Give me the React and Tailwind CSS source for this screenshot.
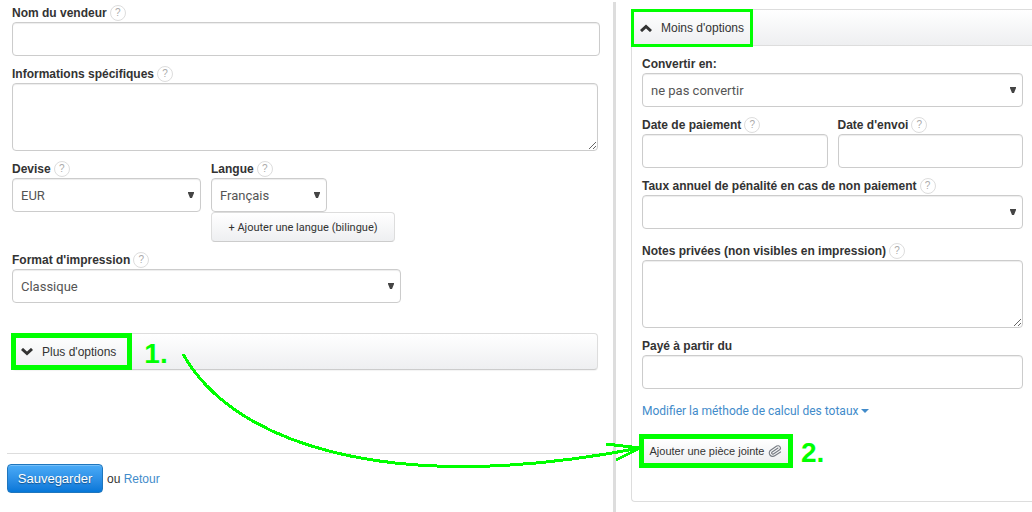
import { useState } from 'react';

const fieldClass = 'block w-full rounded border border-[#ccc] bg-white px-2 font-[Roboto,sans-serif] text-[13px] text-[#555] shadow-[inset_0_1px_1px_rgba(0,0,0,0.075)] outline-none focus:border-sky-400';

function Label({ htmlFor, help = true, children }) {
    return (
        <div className="mb-px flex h-4 items-center gap-[3px]">
            <label htmlFor={htmlFor} className="text-xs leading-4 font-bold whitespace-nowrap text-[#333]">{children}</label>
            {help && (
                <button type="button" aria-label="Aide" className="flex size-4 shrink-0 items-center justify-center rounded-full border border-[#ddd] bg-white text-[10px] leading-none text-[#aaa]">?</button>
            )}
        </div>
    );
}

function TextField({ id, label, help }) {
    return (
        <div>
            <Label htmlFor={id} help={help}>{label}</Label>
            <input id={id} type="text" className={`${fieldClass} h-[34px]`} />
        </div>
    );
}

function TextArea({ id, label }) {
    return (
        <div>
            <Label htmlFor={id}>{label}</Label>
            <textarea id={id} className={`${fieldClass} h-[68px] resize`} />
        </div>
    );
}

function SelectField({ id, label, help, options }) {
    return (
        <div>
            <Label htmlFor={id} help={help}>{label}</Label>
            <div className="relative">
                <select id={id} className={`${fieldClass} h-[34px] appearance-none pt-[2px]`}>
                    {options.map(o => <option key={o}>{o}</option>)}
                </select>
                <svg viewBox="0 0 6 6" className="pointer-events-none absolute top-[14px] right-[7px] size-[6px] fill-[#444]">
                    <path d="M0 0h6v1L4 6H2L0 1z" />
                </svg>
            </div>
        </div>
    );
}

function Chevron({ up }) {
    return (
        <svg viewBox="0 0 12 8" className="h-2 w-3 fill-none stroke-[#333] stroke-3">
            <path d={up ? 'M1 7L6 2.5L11 7' : 'M1 1L6 5.5L11 1'} />
        </svg>
    );
}

function Clip() {
    return (
        <svg viewBox="0 0 24 24" className="size-[14px] fill-none stroke-[#777c83] stroke-2" strokeLinecap="round" strokeLinejoin="round">
            <path transform="rotate(12 12 12)" d="m16 6-8.414 8.586a2 2 0 0 0 2.829 2.829l8.414-8.586a4 4 0 1 0-5.657-5.657l-8.379 8.551a6 6 0 1 0 8.485 8.485l8.379-8.551" />
        </svg>
    );
}

export default function App() {
    const [open, setOpen] = useState(true);

    return (
        <div className="relative grid min-h-screen grid-cols-[minmax(0,613fr)_3px_minmax(0,416fr)] overflow-hidden bg-white font-['Liberation_Sans',Arial,sans-serif] text-xs text-[#333]">
            {/* Left column */}
            <form className="pt-[5px] pl-[7px]" onSubmit={e => e.preventDefault()}>
                <div className="flex flex-col gap-[10px] pr-[15px] pl-[5px]">
                    <div className="-mr-[2px]">
                        <TextField id="seller" label="Nom du vendeur" />
                    </div>
                    <TextArea id="infos" label="Informations spécifiques" />
                    <div className="flex items-start gap-[10px]">
                        <div className="w-[189px]">
                            <SelectField id="currency" label="Devise" options={['EUR', 'USD', 'GBP']} />
                        </div>
                        <div>
                            <div className="w-[116px]">
                                <SelectField id="lang" label="Langue" options={['Français', 'English']} />
                            </div>
                            <button type="button" className="h-[30px] w-[184px] rounded border border-[#ddd] border-b-[#ccc] bg-linear-to-b from-white to-[#eeeff1] pt-[2px] font-[Roboto,sans-serif] text-[11px] whitespace-nowrap">
                                + Ajouter une langue (bilingue)
                            </button>
                        </div>
                    </div>
                    <div className="w-[389px]">
                        <SelectField id="format" label="Format d'impression" options={['Classique', 'Moderne']} />
                    </div>
                    <div className="relative mt-5 flex h-[37px] items-center rounded border border-[#ddd] border-b-[#ccc] bg-linear-to-b from-white to-[#eeeff1] shadow-[0_1px_1px_rgba(0,0,0,0.05)]">
                        <button type="button" className="flex items-center gap-[9px] pl-2">
                            <Chevron />
                            Plus d'options
                        </button>
                        <span className="pointer-events-none absolute -top-px -left-[2px] h-[37px] w-[121px] border-5 border-[#0f0]" />
                        <span className="ml-7 pt-1 text-[28px] leading-none font-bold text-[#0f0]">1.</span>
                    </div>
                </div>

                <div className="mt-[83px] mr-3 flex items-center gap-1 border-t border-[#ddd] pt-[10px]">
                    <button type="submit" className="h-[29px] w-24 rounded border border-[#1f76bd] bg-linear-to-b from-[#4aabf7] to-[#0577d8] text-[13px] text-white shadow-[inset_0_1px_0_rgba(255,255,255,0.25)] [text-shadow:0_1px_1px_rgba(0,0,0,0.4)]">
                        Sauvegarder
                    </button>
                    <span>ou <a href="#retour" className="text-[#428bca]">Retour</a></span>
                </div>
            </form>

            <div className="mt-[2px] bg-[#ddd]" />

            {/* Right column */}
            <div className="pt-[9px] pl-[15px]">
                <section className="rounded-l border border-r-0 border-[#ddd]">
                    <header className="relative flex h-9 items-center border-b border-[#ddd] bg-linear-to-b from-white to-[#eeeff1]">
                        <button type="button" onClick={() => setOpen(!open)} className="flex items-center gap-[9px] pl-2">
                            <Chevron up />
                            Moins d'options
                        </button>
                        <span className="pointer-events-none absolute -top-px -left-px h-[38px] w-[122px] border-3 border-[#0f0]" />
                    </header>
                    {open && (
                        <div className="flex flex-col gap-[10px] pt-[10px] pr-[9px] pb-[33px] pl-[10px]">
                            <SelectField id="convert" label="Convertir en:" help={false} options={['ne pas convertir', 'EUR', 'USD']} />
                            <div className="grid grid-cols-2 gap-[10px]">
                                <TextField id="paid" label="Date de paiement" />
                                <TextField id="sent" label="Date d'envoi" />
                            </div>
                            <SelectField id="penalty" label="Taux annuel de pénalité en cas de non paiement" options={['']} />
                            <div className="mt-1">
                                <TextArea id="notes" label="Notes privées (non visibles en impression)" />
                            </div>
                            <TextField id="from" label="Payé à partir du" help={false} />
                            <a href="#totaux" className="mt-1 flex items-center gap-[3px] font-[Roboto,sans-serif] text-xs leading-4 whitespace-nowrap text-[#428bca]">
                                Modifier la méthode de calcul des totaux
                                <svg viewBox="0 0 8 4" className="h-1 w-2 fill-current"><path d="M0 0h8L4 4z" /></svg>
                            </a>
                            <div className="mt-[5px] -ml-[3px] flex items-center gap-2">
                                <button type="button" className="flex h-[34px] w-[154px] items-center justify-center gap-1 border-5 border-[#0f0] bg-linear-to-b from-white to-[#eeeff1] text-[11px] whitespace-nowrap">
                                    Ajouter une pièce jointe
                                    <Clip />
                                </button>
                                <span className="pt-1 text-[28px] leading-none font-bold text-[#0f0]">2.</span>
                            </div>
                        </div>
                    )}
                </section>
            </div>

            {/* Arrow from step 1 to step 2 */}
            <svg viewBox="0 0 460 120" className="pointer-events-none absolute top-[350px] left-[181px] h-[120px] w-[460px] fill-none stroke-[#0f0] stroke-3" shapeRendering="crispEdges">
                <path d="M2 4C51 92 204 147 459 98M425 94L459 98L435 110" />
            </svg>
        </div>
    );
}
